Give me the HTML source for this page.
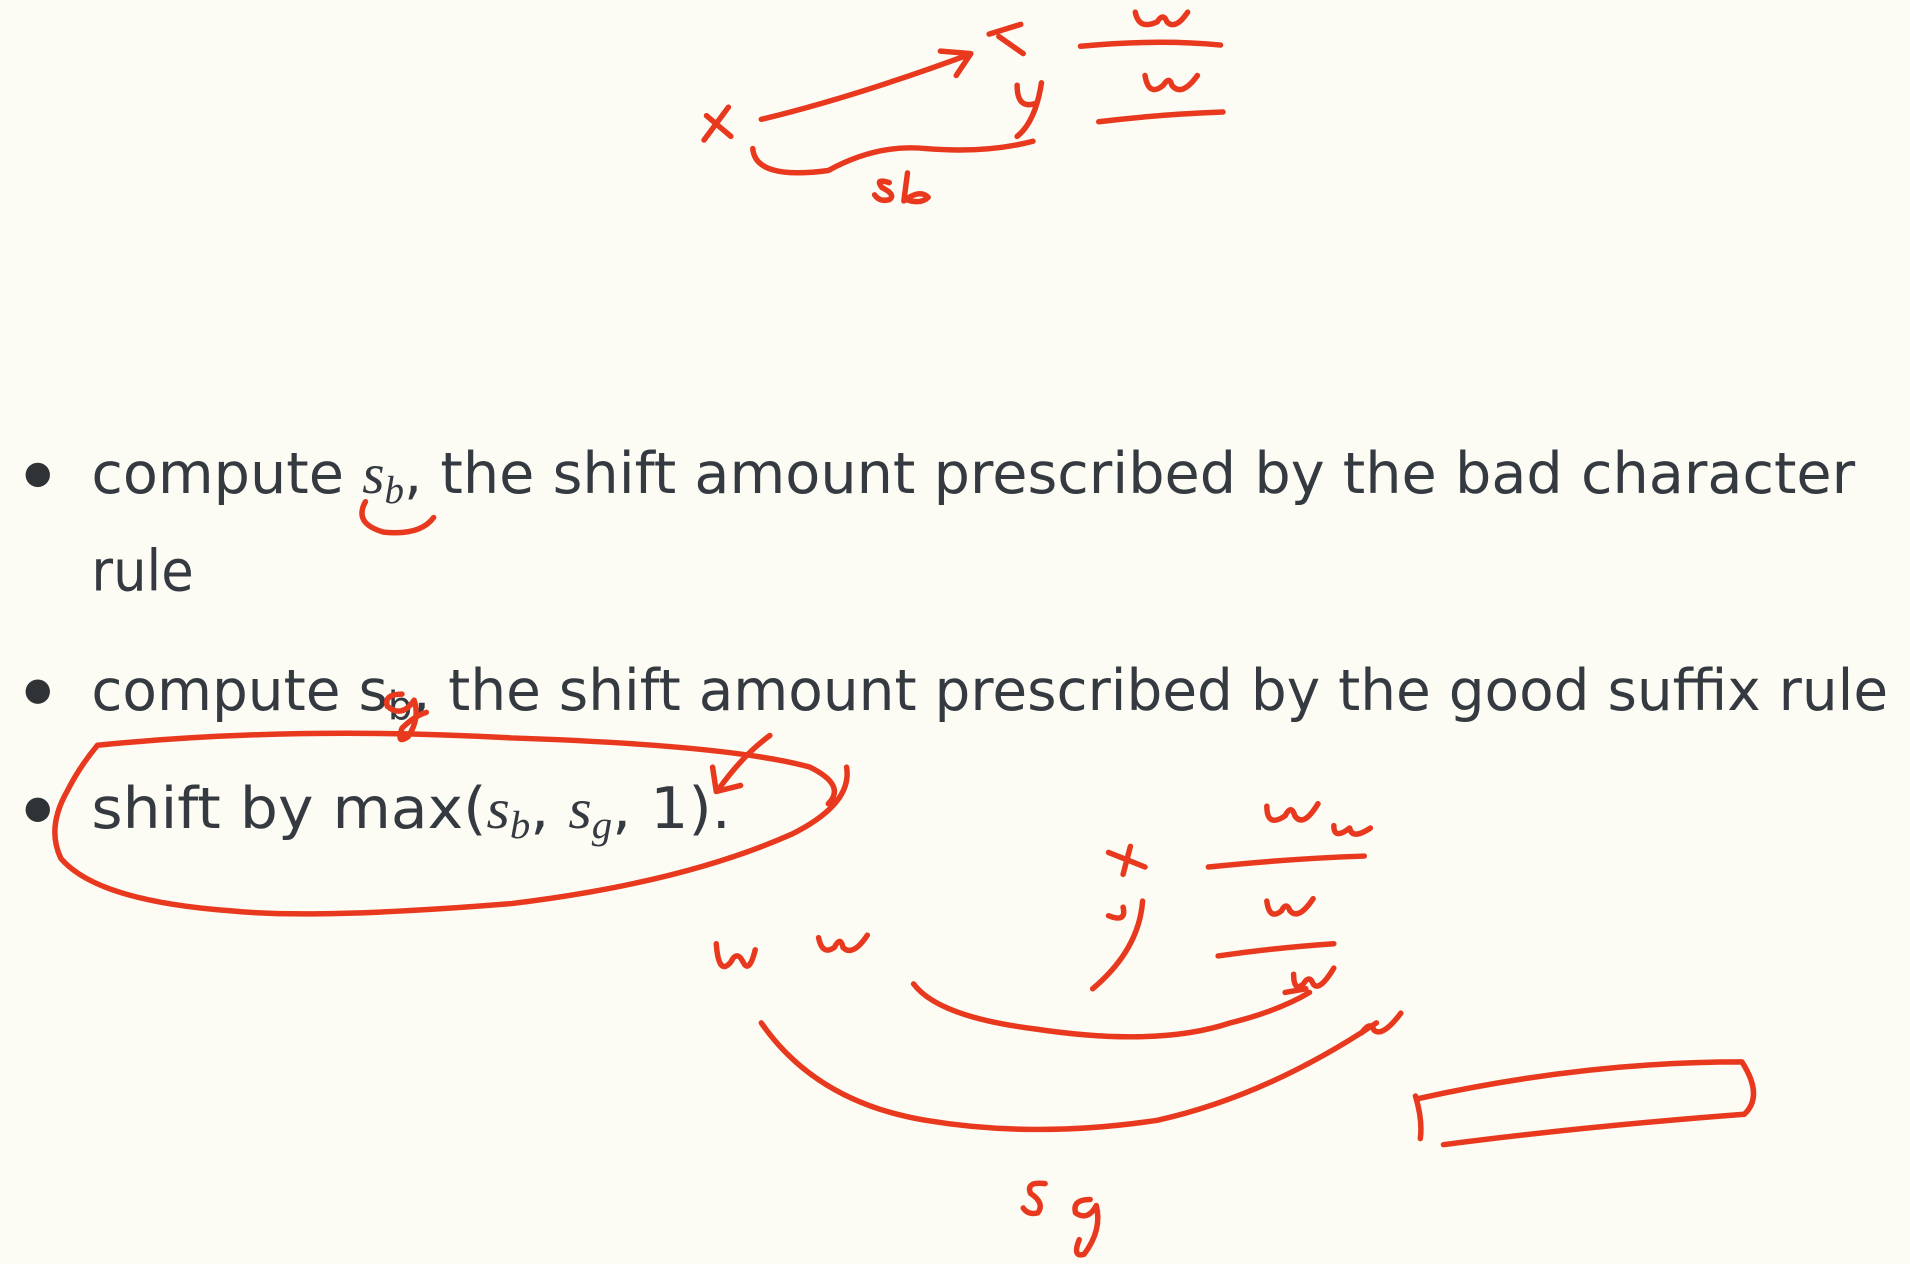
<!DOCTYPE html>
<html><head><meta charset="utf-8"><style>
html,body{margin:0;padding:0;background:#fcfcf4;}
svg{display:block}
text{font-family:"DejaVu Sans","Liberation Sans",sans-serif;fill:#343a40;}
.m{font-family:"Liberation Serif",serif;font-style:italic;}
</style></head><body>
<svg width="1910" height="1264" viewBox="0 0 1568 1038" preserveAspectRatio="none">
<rect width="1568" height="1038" fill="#fcfcf4"/>
<circle cx="31" cy="390" r="10" fill="#2f3336"/>
<circle cx="31" cy="568" r="10" fill="#2f3336"/>
<circle cx="31" cy="665" r="10" fill="#2f3336"/>
<text x="75" y="405" font-size="47" textLength="1448" lengthAdjust="spacingAndGlyphs">compute <tspan class="m">s</tspan><tspan class="m" font-size="32" dy="8">b</tspan><tspan dy="-8">, the shift amount prescribed by the bad character</tspan></text>
<text x="75" y="485" font-size="47" textLength="84" lengthAdjust="spacingAndGlyphs">rule</text>
<text x="75" y="583" font-size="47" textLength="1475" lengthAdjust="spacingAndGlyphs">compute s<tspan font-size="32" dy="8">b</tspan><tspan dy="-8">, the shift amount prescribed by the good suffix rule</tspan></text>
<text x="75" y="680" font-size="47" textLength="525" lengthAdjust="spacingAndGlyphs">shift by max(<tspan class="m">s</tspan><tspan class="m" font-size="32" dy="8">b</tspan><tspan dy="-8">, </tspan><tspan class="m">s</tspan><tspan class="m" font-size="32" dy="8">g</tspan><tspan dy="-8">, 1).</tspan></text>
<g fill="none" stroke="#e8391f" stroke-width="4.5" stroke-linecap="round" stroke-linejoin="round">
<!-- top -->
<path d="M580 95 L600 112 M598 88 L578 115"/>
<path d="M625 98 Q700 80 795 45 M772 42 L797 44 L785 62"/>
<path d="M812 28 L838 20 M820 30 L840 44"/>
<path d="M835 70 Q835 90 850 85 M855 68 Q850 100 835 112"/>
<path d="M618 122 Q620 148 680 140 Q720 118 760 122 Q810 126 848 116"/>
<path d="M730 150 Q718 146 724 154 Q736 160 730 164 Q722 166 718 160 M745 142 L742 165 Q755 155 762 162 Q756 168 744 164"/>
<path d="M932 10 Q935 25 950 18 Q955 10 958 18 Q965 25 975 10"/>
<path d="M887 38 Q950 32 1002 37"/>
<path d="M940 62 Q943 80 955 70 Q960 62 962 70 Q970 80 983 62"/>
<path d="M902 100 Q950 94 1004 92"/>
<!-- s_b underline -->
<path d="M300 412 Q290 430 315 437 Q345 440 356 425"/>
<!-- g overwrite -->
<path d="M330 570 Q315 570 318 580 Q330 590 340 575 Q345 590 335 605 Q325 612 330 598 Q340 588 350 585"/>
<!-- ellipse -->
<path d="M80 612 Q240 596 420 606 Q600 612 665 630 Q695 645 680 660 M695 630 Q700 660 650 685 Q560 725 420 742 Q260 755 190 748 Q80 740 50 705 Q38 680 55 650 Q65 630 80 612"/>
<path d="M632 604 Q610 620 590 648 M585 630 L588 650 L608 645"/>
<!-- bottom -->
<path d="M910 700 L940 712 M928 695 L922 718"/>
<path d="M1040 662 Q1040 680 1055 670 Q1060 660 1063 670 Q1070 680 1082 660 M1095 678 Q1095 690 1108 680 Q1110 690 1125 680"/>
<path d="M992 712 Q1060 705 1120 703"/>
<path d="M910 752 Q925 758 922 745 M938 740 Q935 780 897 812"/>
<path d="M1040 740 Q1042 756 1052 748 Q1056 740 1059 748 Q1066 756 1078 738"/>
<path d="M1000 785 Q1050 778 1095 775"/>
<path d="M1062 800 Q1062 815 1070 808 Q1075 800 1078 808 Q1083 815 1095 795 M1055 815 L1072 812"/>
<path d="M588 775 Q590 802 600 790 Q605 780 610 790 Q615 800 620 780"/>
<path d="M672 770 Q675 785 685 778 Q690 768 692 778 Q700 786 712 768"/>
<path d="M750 808 Q770 835 850 845 Q950 860 1010 840 Q1050 830 1075 815"/>
<path d="M625 840 Q670 905 760 920 Q850 935 950 920 Q1040 900 1130 840"/>
<path d="M1118 848 Q1125 838 1128 846 Q1135 852 1150 832"/>
<path d="M1162 900 Q1168 920 1166 935 M1165 902 Q1300 872 1430 872 Q1448 900 1432 915 Q1300 925 1185 940"/>
<path d="M858 972 Q842 970 846 980 Q858 988 852 996 Q844 998 840 992"/>
<path d="M895 985 Q880 985 883 996 Q893 1003 900 990 Q905 1010 890 1030 Q880 1033 886 1018"/>
</g>
</svg>
</body></html>
